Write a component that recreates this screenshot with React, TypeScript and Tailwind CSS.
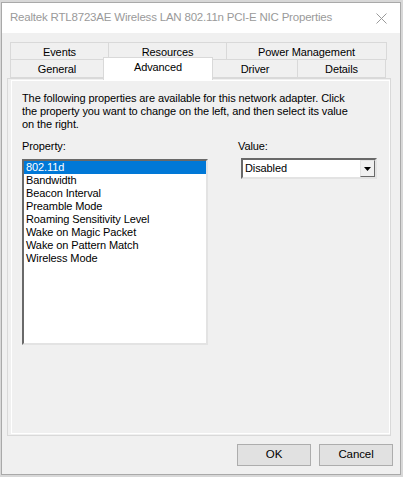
import { useState } from "react";

const backTabs = [
  { label: "Events", w: "w-[99px]" },
  { label: "Resources", w: "w-[119px]" },
  { label: "Power Management", w: "w-[161px]" },
];

const frontTabs = [
  { label: "General", w: "w-[94px]" },
  { label: "Advanced", w: "w-[110px]" },
  { label: "Driver", w: "w-[86px]" },
  { label: "Details", w: "w-[89px]" },
];

const properties = [
  "802.11d",
  "Bandwidth",
  "Beacon Interval",
  "Preamble Mode",
  "Roaming Sensitivity Level",
  "Wake on Magic Packet",
  "Wake on Pattern Match",
  "Wireless Mode",
];

const font = "font-['Liberation_Sans',Arial,sans-serif]";

const App = () => {
  const [selected, setSelected] = useState(0);

  return (
    <div
      className={`w-[403px] h-[477px] bg-[#d8d8d8] pt-[2px] pl-[1px] text-[11px] tracking-[-0.1px] text-black ${font}`}
    >
      <div className="w-[400px] h-[473px] border border-[#a9a9a9] flex flex-col bg-[#f0f0f0]">
        {/* title bar */}
        <div className="h-[30px] bg-white flex items-center justify-between pl-[8px] pr-[13px] shrink-0">
          <span className="text-[11.5px] text-[#9a9a9a] tracking-[-0.2px]">
            Realtek RTL8723AE Wireless LAN 802.11n PCI-E NIC Properties
          </span>
          <svg width="11" height="11" viewBox="0 0 11 11">
            <path d="M0.5 0.5 L10.5 10.5 M10.5 0.5 L0.5 10.5" stroke="#9a9a9a" strokeWidth="1" />
          </svg>
        </div>

        <div className="flex flex-col pt-[9px] pl-[5px]">
          {/* tabs */}
          <div className="flex flex-col pl-[3px]">
            <div className="flex">
              {backTabs.map((t) => (
                <div
                  key={t.label}
                  className={`${t.w} h-[18px] border border-[#d9d9d9] -ml-px first:ml-0 flex items-center justify-center pt-[3px]`}
                >
                  {t.label}
                </div>
              ))}
            </div>
            <div className="flex items-end -mt-px">
              {frontTabs.map((t) =>
                t.label === "Advanced" ? (
                  <div
                    key={t.label}
                    className={`${t.w} h-[23px] -mt-[3px] -ml-px -mb-[2px] bg-white border border-b-0 border-[#d9d9d9] relative z-10 flex items-start justify-center pt-[1px]`}
                  >
                    {t.label}
                  </div>
                ) : (
                  <div
                    key={t.label}
                    className={`${t.w} h-[19px] border border-[#d9d9d9] -ml-px first:ml-0 flex items-center justify-center pt-[2px]`}
                  >
                    {t.label}
                  </div>
                ),
              )}
            </div>
          </div>

          {/* panel */}
          <div className="w-[384px] h-[358px] border border-[#d9d9d9] pl-[3px] pt-[1px] pb-[1px]">
            <div className="h-full border border-white pl-[10px] pt-[11px]">
              <p className="leading-[13px] whitespace-nowrap">
                The following properties are available for this network adapter. Click
                <br />
                the property you want to change on the left, and then select its value
                <br />
                on the right.
              </p>

              <div className="flex mt-[9px]">
                <div className="w-[186px] flex flex-col">
                  <span className="leading-[13px]">Property:</span>
                  <div className="mt-[6px] w-[186px] h-[186px] bg-white border-2 border-t-[#696969] border-l-[#696969] border-r-[#e3e3e3] border-b-[#e3e3e3]">
                    {properties.map((p, i) => (
                      <div
                        key={p}
                        onClick={() => setSelected(i)}
                        className={`h-[13px] leading-[13px] pl-[2px] cursor-default ${
                          i === selected ? "bg-[#0078d7] text-white" : ""
                        }`}
                      >
                        {p}
                      </div>
                    ))}
                  </div>
                </div>

                <div className="ml-[30px] flex flex-col">
                  <span className="leading-[13px]">Value:</span>
                  <div className="mt-[5px] ml-[3px] w-[136px] h-[21px] bg-white border-2 border-t-[#696969] border-l-[#696969] border-r-[#e3e3e3] border-b-[#e3e3e3] flex items-center justify-between">
                    <span className="pl-[2px] leading-[13px]">Disabled</span>
                    <div className="w-[15px] h-[17px] bg-[#f0f0f0] border border-t-[#e3e3e3] border-l-[#e3e3e3] border-r-[#696969] border-b-[#696969] flex items-center justify-center">
                      <svg width="7" height="4" viewBox="0 0 7 4">
                        <path d="M0 0 H7 L3.5 4 Z" fill="#000" />
                      </svg>
                    </div>
                  </div>
                </div>
              </div>
            </div>
          </div>
        </div>

        {/* buttons */}
        <div className="flex justify-end gap-[8px] pr-[7px] mt-[8px]">
          <button className="w-[74px] h-[22px] bg-[#e1e1e1] border border-[#adadad] leading-none text-[11.5px]">
            OK
          </button>
          <button className="w-[74px] h-[22px] bg-[#e1e1e1] border border-[#adadad] leading-none text-[11.5px]">
            Cancel
          </button>
        </div>
      </div>
    </div>
  );
};

export default App;
